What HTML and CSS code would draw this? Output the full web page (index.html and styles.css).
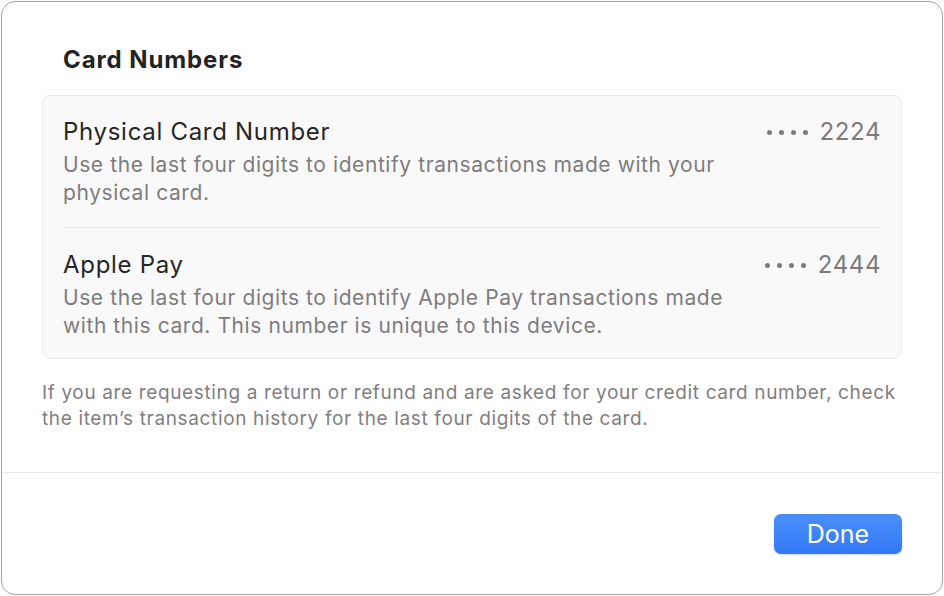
FILE: index.html
```html
<!DOCTYPE html>
<html>
<head>
  <title>Card Numbers</title>
  <link rel="stylesheet" href="styles.css">
</head>
<body>
  <div class="sheet">
    <div class="sheet-body">
      <h2 class="sheet-title">Card Numbers</h2>

      <div class="group">
        <div class="row">
          <div class="row-text">
            <div class="row-title">Physical Card Number</div>
            <div class="row-desc">Use the last four digits to identify transactions made with your physical card.</div>
          </div>
          <div class="row-value">
            <span class="dots"><i></i><i></i><i></i><i></i></span>
            <span>2224</span>
          </div>
        </div>
        <div class="row">
          <div class="row-text">
            <div class="row-title">Apple Pay</div>
            <div class="row-desc">Use the last four digits to identify Apple Pay transactions made with this card. This number is unique to this device.</div>
          </div>
          <div class="row-value">
            <span class="dots"><i></i><i></i><i></i><i></i></span>
            <span>2444</span>
          </div>
        </div>
      </div>

      <p class="note">If you are requesting a return or refund and are asked for your credit card number, check the item’s transaction history for the last four digits of the card.</p>
    </div>

    <div class="sheet-footer">
      <button class="btn-done">Done</button>
    </div>
  </div>
</body>
</html>
```

FILE: styles.css
```css
body {
  margin: 0;
  font-family: Inter, "Open Sans", sans-serif;
  background-color: #ffffff;
  color: #262626;
}

.sheet {
  box-sizing: border-box;
  width: 942px;
  height: 594px;
  margin: 1px;
  border: 1px solid #a3a3a3;
  border-radius: 14px;
  background-color: #ffffff;
  display: flex;
  flex-direction: column;
}

.sheet-body {
  padding: 44px 40px 0 40px;
  height: 471px;
  box-sizing: border-box;
  border-bottom: 1px solid #ececec;
}

.sheet-title {
  margin: 0 0 21px 21px;
  font-size: 24px;
  line-height: 28px;
  font-weight: 700;
  letter-spacing: 0.9px;
  color: #232323;
}

.group {
  background-color: #f9f9f9;
  border: 1px solid #ebebeb;
  border-radius: 8px;
  padding: 0 20px;
}

.row {
  display: flex;
  justify-content: space-between;
  align-items: flex-start;
  padding: 22px 0 20px;
}

.row + .row {
  border-top: 1px solid #ececec;
  padding-top: 23px;
  padding-bottom: 18px;
}

.row-text {
  max-width: 690px;
}

.row-title {
  font-size: 24px;
  line-height: 28px;
  letter-spacing: 0.7px;
  margin-bottom: 5px;
  color: #262626;
}

.row-desc {
  font-size: 21px;
  line-height: 28px;
  letter-spacing: 0.58px;
  color: #7d7d7d;
}

.row-value {
  display: flex;
  align-items: center;
  gap: 12px;
  font-size: 24px;
  line-height: 28px;
  letter-spacing: 0.6px;
  color: #7b7b7b;
  white-space: nowrap;
}

.dots {
  display: flex;
  gap: 7px;
}

.dots i {
  width: 5px;
  height: 5px;
  border-radius: 50%;
  background-color: #7b7b7b;
}

.note {
  margin: 21px 0 0 0;
  font-size: 19px;
  line-height: 26px;
  letter-spacing: 0.64px;
  color: #808080;
}

.sheet-footer {
  flex: 1;
  display: flex;
  justify-content: flex-end;
  align-items: flex-start;
  padding: 41px 40px 0 0;
}

.btn-done {
  width: 128px;
  height: 40px;
  border: none;
  border-radius: 7px;
  background: linear-gradient(#4a8ff7, #3378f6);
  box-shadow: 0 1px 2px rgba(40, 100, 220, 0.25);
  color: #ffffff;
  font-family: Inter, "Open Sans", sans-serif;
  font-size: 25px;
  cursor: pointer;
}
```
